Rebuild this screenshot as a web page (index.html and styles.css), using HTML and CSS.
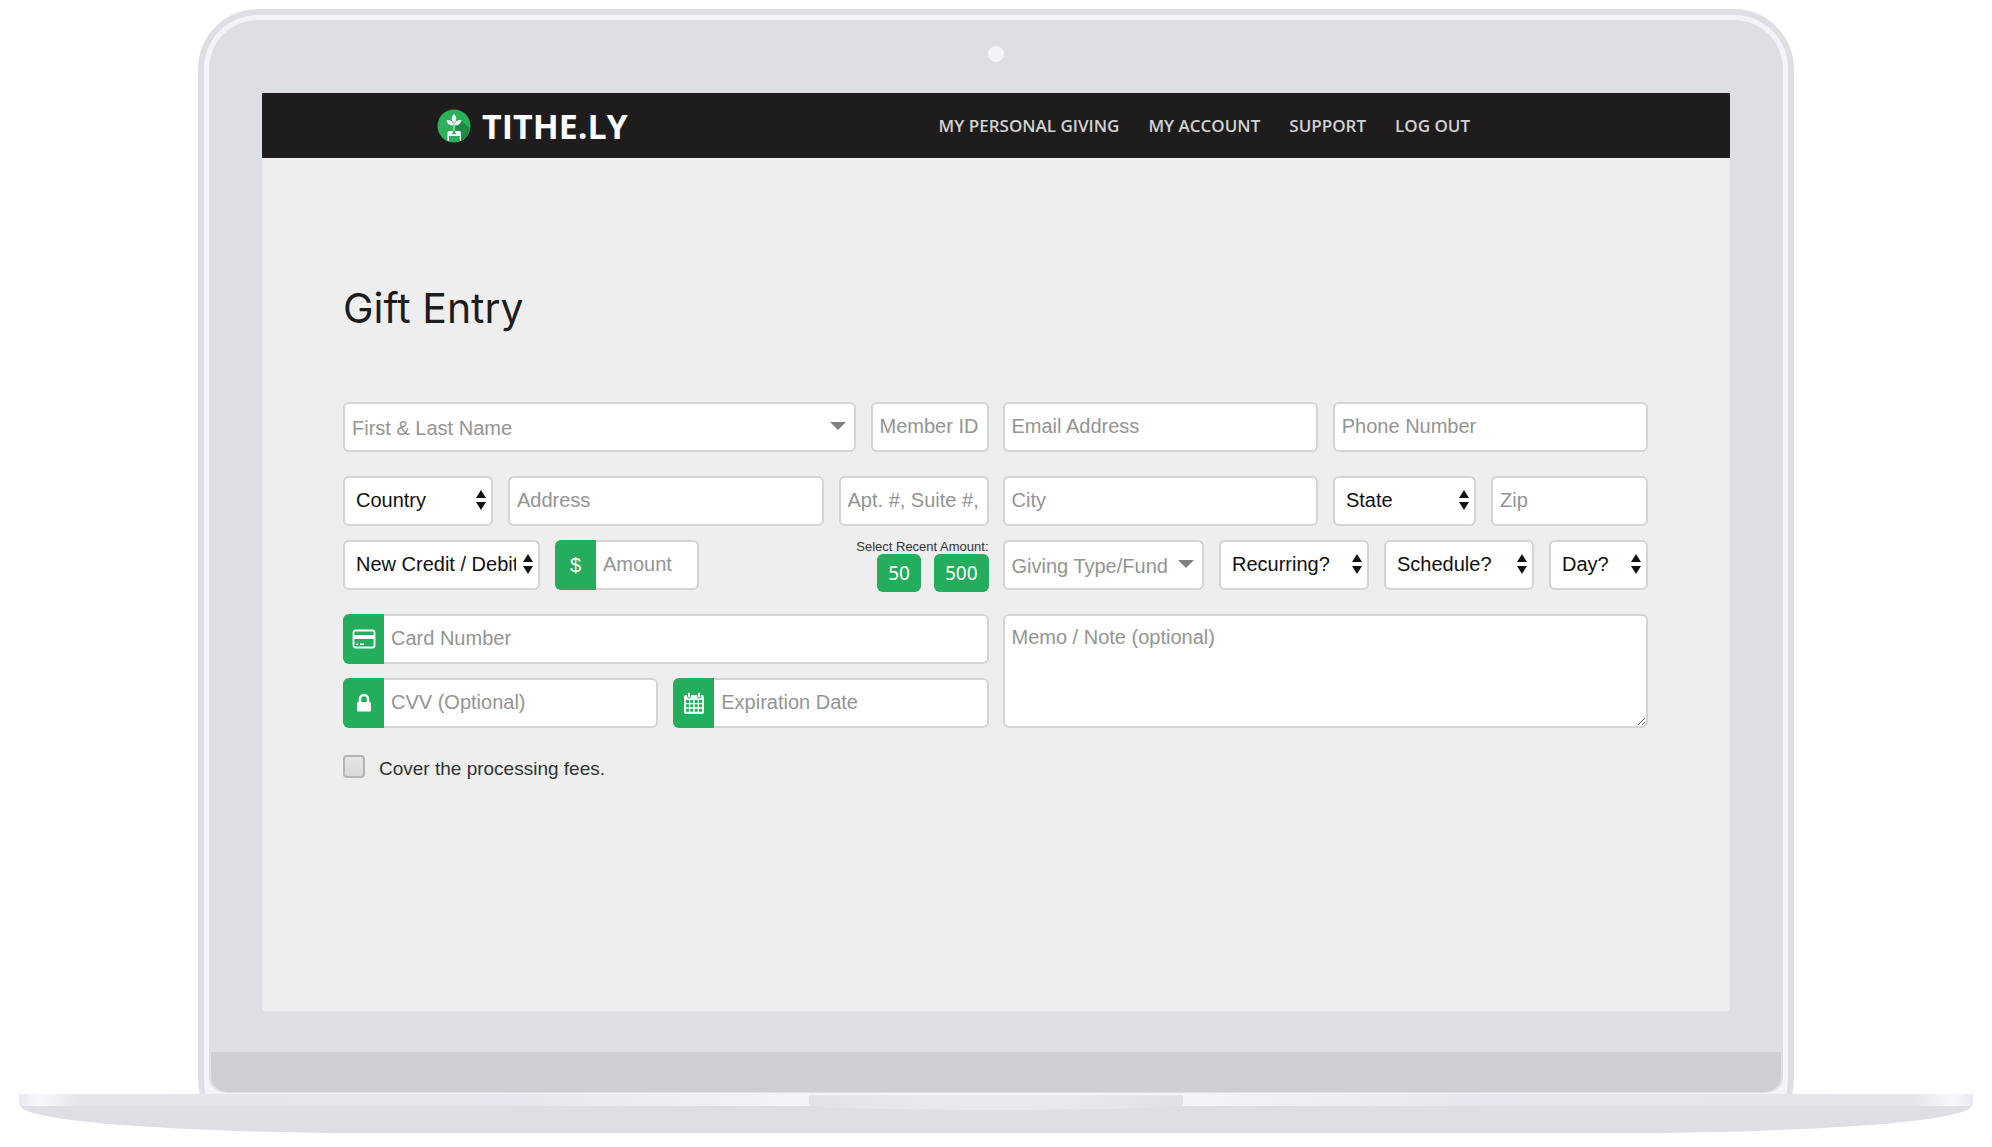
FILE: index.html
```html
<!DOCTYPE html>
<html lang="en">
<head>
<meta charset="utf-8">
<title>Tithe.ly – Gift Entry</title>
<link rel="stylesheet" href="styles.css">
</head>
<body>
<div class="laptop">
  <div class="lid">
    <div class="bezel">
      <div class="camera"></div>
      <div class="screen">
        <header class="topbar">
          <a class="brand" href="#">
            <svg class="brand-mark" viewBox="0 0 34 34" aria-hidden="true">
              <circle cx="17" cy="17" r="16.500" fill="#2bb05c"/>
              <path d="M24 11 33 19.500A16.500 16.500 0 0 1 24 32V23l-7-3z" fill="#1f8a46"/>
              <g fill="#fff">
                <path d="M17 5c3 3.500 3 6 0 9-3-3-3-5.500 0-9z"/>
                <path d="M9.500 11c4.500-.2 6.500 1.500 7 5.200-4.200.3-6.300-1.200-7-5.200zM24.500 11c-4.500-.2-6.500 1.500-7 5.200 4.200.3 6.300-1.200 7-5.200z"/>
                <path d="M16.600 14h.8v8h-.8z"/>
                <path d="M12.200 22H16l-1 3.200h4L18 22h3.800c1.300 0 2.200.8 2.200 2v8h-1.200v-5H12v5h-1.500v-8c0-1.200.6-2 1.700-2z"/>
              </g>
            </svg>
            <span>TITHE.LY</span>
          </a>
          <nav class="menu">
            <a href="#">MY PERSONAL GIVING</a>
            <a href="#">MY ACCOUNT</a>
            <a href="#">SUPPORT</a>
            <a href="#">LOG OUT</a>
          </nav>
        </header>
        <main class="page">
          <h1>Gift Entry</h1>
          <form class="gift">
            <div class="half">
              <div class="picker">
                <input class="field" type="text" placeholder="First &amp; Last Name" aria-label="First and last name">
              </div>
              <input class="field w-118" type="text" placeholder="Member ID" aria-label="Member ID">
            </div>
            <div class="half">
              <input class="field" type="email" placeholder="Email Address" aria-label="Email address">
              <input class="field" type="tel" placeholder="Phone Number" aria-label="Phone number">
            </div>

            <div class="half">
              <div class="select w-150"><select class="field" aria-label="Country"><option>Country</option></select></div>
              <input class="field" type="text" placeholder="Address" aria-label="Address">
              <input class="field w-150" type="text" placeholder="Apt. #, Suite #, etc." aria-label="Apartment or suite">
            </div>
            <div class="half even">
              <input class="field" type="text" placeholder="City" aria-label="City">
              <div class="pair">
                <div class="select w-143"><select class="field" aria-label="State"><option>State</option></select></div>
                <input class="field" type="text" placeholder="Zip" aria-label="Zip">
              </div>
            </div>

            <div class="half tight">
              <div class="select w-197"><select class="field" aria-label="Payment method"><option>New Credit / Debit Card</option></select></div>
              <div class="addon w-144">
                <label class="tag" for="amount">$</label>
                <input class="field" id="amount" type="text" placeholder="Amount">
              </div>
              <div class="recent">
                <span class="recent-title">Select Recent Amount:</span>
                <div class="recent-list">
                  <button type="button">50</button>
                  <button type="button">500</button>
                </div>
              </div>
            </div>
            <div class="half tight">
              <div class="picker">
                <input class="field" type="text" placeholder="Giving Type/Fund" aria-label="Giving type or fund">
              </div>
              <div class="select w-150"><select class="field" aria-label="Recurring"><option>Recurring?</option></select></div>
              <div class="select w-150"><select class="field" aria-label="Schedule"><option>Schedule?</option></select></div>
              <div class="select w-99"><select class="field" aria-label="Day"><option>Day?</option></select></div>
            </div>

            <div class="card">
              <div class="addon">
                <label class="tag" for="card" aria-label="Card number">
                  <svg width="24" height="24" viewBox="0 0 24 24" aria-hidden="true"><rect x="1.500" y="3.500" width="21" height="17" rx="2" fill="none" stroke="#fff" stroke-width="1.800"/><path fill="#fff" d="M2 8h20v4H2zM4 16.500h2V18H4zM8 16.500h4V18H8z"/></svg>
                </label>
                <input class="field" id="card" type="text" placeholder="Card Number">
              </div>
              <div class="pair">
                <div class="addon">
                  <label class="tag" for="cvv" aria-label="CVV">
                    <svg width="24" height="24" viewBox="0 0 24 24" aria-hidden="true"><path d="M8 12V8a4 4 0 0 1 8 0v4" fill="none" stroke="#fff" stroke-width="2.500"/><rect x="5" y="11" width="14" height="9.500" rx="1.200" fill="#fff"/></svg>
                  </label>
                  <input class="field" id="cvv" type="text" placeholder="CVV (Optional)">
                </div>
                <div class="addon">
                  <label class="tag" for="expires" aria-label="Expiration date">
                    <svg width="24" height="24" viewBox="0 0 24 24" aria-hidden="true">
                      <path fill="#fff" d="M4 4h16a2 2 0 0 1 2 2v15a2 2 0 0 1-2 2H4a2 2 0 0 1-2-2V6a2 2 0 0 1 2-2z"/>
                      <path fill="#fff" stroke="#23ad5c" stroke-width="1" d="M5.500 2.500q0-1.500 1.500-1.500t1.500 1.500v3Q8.500 7 7 7T5.500 5.500zM15.500 2.500q0-1.500 1.500-1.500t1.500 1.500v3Q18.500 7 17 7t-1.500-1.500z"/>
                      <path fill="#23ad5c" d="M4 9h3v3H4zm4.300 0h3v3h-3zm4.400 0h3v3h-3zM17 9h3v3h-3zM4 13.300h3v3H4zm4.300 0h3v3h-3zm4.400 0h3v3h-3zm4.300 0h3v3h-3zM4 17.700h3v3H4zm4.300 0h3v3h-3zm4.400 0h3v3h-3zm4.300 0h3v3h-3z"/>
                    </svg>
                  </label>
                  <input class="field" id="expires" type="text" placeholder="Expiration Date">
                </div>
              </div>
            </div>
            <textarea class="field memo" placeholder="Memo / Note (optional)" aria-label="Memo or note"></textarea>

            <label class="fees"><input type="checkbox"> Cover the processing fees.</label>
          </form>
        </main>
      </div>
      <div class="hinge"></div>
    </div>
  </div>
  <div class="base">
    <div class="edge"></div>
    <div class="belly"></div>
    <div class="notch"></div>
  </div>
</div>
</body>
</html>
```
FILE: styles.css
```css
* { box-sizing: border-box; }

body {
  margin: 0;
  background: #fff;
  color: #333;
  font-family: "Liberation Sans", Arial, sans-serif;
  font-size: 20px;
}

.laptop { padding: 9px 19px 14px; }

/* Lid: its lower end runs down behind the base */
.lid {
  margin: 0 179px;
  padding: 6px 6px 0;
  border-radius: 60px 60px 28px 28px / 60px 60px 45px 45px;
  background: #dedfe4;
}
.bezel {
  border: 5px solid #f3f4fa;
  border-bottom-width: 30px;
  border-radius: 54px 54px 24px 24px / 54px 54px 45px 45px;
  background: #dedfe4;
  overflow: hidden;
}
.camera {
  width: 16px;
  height: 16px;
  margin: 26px auto 31px;
  border-radius: 50%;
  background: #f3f4fa;
}
.screen {
  min-height: 918px;
  margin: 0 53px 41px;
  background: #eee;
}
.hinge {
  height: 40px;
  margin: 0 2px 1px;
  border-radius: 0 0 16px 16px;
  background: #cecfd3;
}

/* Base */
.base { position: relative; margin-top: -29px; }
.edge {
  height: 12px;
  background: linear-gradient(90deg, #e8e9f0, #f8f9ff 1%, #e5e6ec 3%, #e6e7ee 25%, #f3f4fa 40%, #f3f4fa 60%, #e6e7ee 75%, #e5e6ec 97%, #f8f9ff 99%, #e8e9f0);
}
.belly {
  height: 27px;
  margin: 0 2px;
  border-radius: 0 0 18% 18% / 0 0 100% 100%;
  background: #dedfe4;
}
.notch {
  position: absolute;
  top: 1px;
  left: 50%;
  width: 374px;
  height: 15px;
  margin-left: -187px;
  border-radius: 0 0 50% 50% / 0 0 5px 5px;
  background: linear-gradient(90deg, #e2e3e8, #e8e9ee 30%, #e8e9ee 70%, #e0e1e7);
}

/* Top bar */
.topbar {
  display: flex;
  justify-content: space-between;
  align-items: center;
  height: 65px;
  padding: 0 260px 0 175px;
  background: #1e1c1d;
}
.brand {
  display: flex;
  align-items: center;
  gap: 11px;
  color: #fff;
  font: 700 34px/40px "Open Sans", sans-serif;
  text-decoration: none;
}
.brand-mark { width: 34px; height: 34px; }
.menu { display: flex; gap: 29px; }
.menu a {
  color: #d2d2d2;
  font: 600 17px/24px "Open Sans", sans-serif;
  text-decoration: none;
  white-space: nowrap;
}

/* Page */
.page { padding: 122px 82px 0 81px; }
h1 {
  margin: 0 0 66px;
  color: #1c1c1c;
  font: 400 41px/56px Inter, sans-serif;
}

.gift {
  display: grid;
  grid-template-columns: 1fr 1fr;
  column-gap: 14px;
  row-gap: 24px;
}
.half, .pair { display: flex; gap: 15px; }
.tight { height: 50px; margin-top: -10px; }
.half > *, .pair > * { flex: 1 1 0; min-width: 0; }
.even > * { flex-basis: 50%; }
.half > .w-99 { flex: 0 0 99px; }
.half > .w-118 { flex: 0 0 118px; }
.pair > .w-143 { flex: 0 0 143px; }
.half > .w-144 { flex: 0 0 144px; }
.half > .w-150 { flex: 0 0 150px; }
.half > .w-197 { flex: 0 0 197px; }

.field {
  display: block;
  width: 100%;
  height: 50px;
  padding: 0 7px 2px;
  border: 2px solid #d4d4d4;
  border-radius: 6px;
  background: #fff;
  color: #111;
  font: 20px/24px "Liberation Sans", Arial, sans-serif;
}
.field::placeholder { color: #949494; opacity: 1; }

select.field { appearance: none; padding: 0 22px 3px 11px; }
.select, .picker { position: relative; }
.select::before, .select::after, .picker::after {
  content: "";
  position: absolute;
  right: 7px;
  border: 5px solid transparent;
  pointer-events: none;
}
.select::before { top: 14px; border-top: 0; border-bottom: 8px solid #111; }
.select::after { top: 26px; border-bottom: 0; border-top: 8px solid #111; }
.picker::after {
  top: 20px;
  right: 10px;
  border-width: 8px 8px 0;
  border-top-color: #808080;
}
.picker .field { padding: 3px 7px 0; }

.addon { display: flex; }
.addon .field { flex: 1; min-width: 0; padding-bottom: 1px; border-left: 0; border-radius: 0 6px 6px 0; }
.tag {
  display: flex;
  flex: 0 0 41px;
  align-items: center;
  justify-content: center;
  height: 50px;
  border-radius: 6px 0 0 6px;
  background: #23ad5c;
  color: #fff;
}

.recent { display: flex; flex-direction: column; align-items: flex-end; }
.recent-title { font-size: 13px; line-height: 14px; white-space: nowrap; }
.recent-list { display: flex; gap: 13px; }
.recent button {
  height: 38px;
  padding: 0 11px;
  border: 0;
  border-radius: 6px;
  background: #23ad5c;
  color: #fff;
  font: 19px/24px "Noto Sans", sans-serif;
}

.card { display: grid; gap: 14px; }
.memo { height: 114px; padding-top: 9px; resize: both; }

.fees {
  display: flex;
  align-items: center;
  gap: 14px;
  margin-top: 3px;
  font-size: 19px;
  line-height: 24px;
}
.fees input {
  appearance: none;
  width: 22px;
  height: 23px;
  margin: 0 0 4px;
  border: 2px solid #b4b4b4;
  border-radius: 4px;
  background: linear-gradient(#e6e6e6, #d8d8d8);
}
```
